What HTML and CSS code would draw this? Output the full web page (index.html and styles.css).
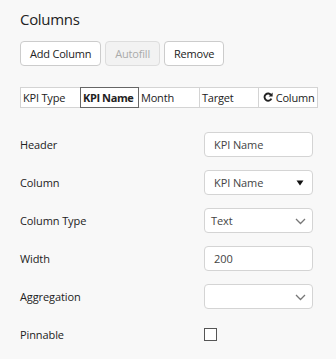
FILE: index.html
```html
<!DOCTYPE html>
<html lang="en">

<head>
  <meta charset="UTF-8">
  <title>Columns</title>
  <link rel="stylesheet" href="styles.css">
</head>

<body>

  <div class="panel">
    <h2 class="title">Columns</h2>

    <!-- Toolbar -->
    <div class="toolbar">
      <button class="btn">Add Column</button>
      <button class="btn" disabled>Autofill</button>
      <button class="btn">Remove</button>
    </div>

    <!-- Column tabs -->
    <div class="tabs">
      <div class="tab">KPI Type</div>
      <div class="tab active">KPI Name</div>
      <div class="tab">Month</div>
      <div class="tab">Target</div>
      <div class="tab">
        <svg class="refresh" width="10" height="10" viewBox="0 0 10 10">
          <path d="M8.2 3.2A3.6 3.6 0 1 0 8.4 6.6" fill="none" stroke="#222" stroke-width="1.9" />
          <path d="M9.6 0.6V4.6H5.6Z" fill="#222" />
        </svg>
        Column
      </div>
    </div>

    <!-- Column settings -->
    <div class="form">
      <label class="label">Header</label>
      <div class="field">
        <div class="input">KPI Name</div>
      </div>

      <label class="label">Column</label>
      <div class="field">
        <div class="input select">
          KPI Name
          <svg class="caret" width="8" height="6" viewBox="0 0 8 6">
            <path d="M0.5 0.5H7.5L4 5.5Z" fill="#111" />
          </svg>
        </div>
      </div>

      <label class="label">Column Type</label>
      <div class="field">
        <div class="input native">
          Text
          <svg class="chevron" width="11" height="7" viewBox="0 0 11 7">
            <path d="M1 1L5.5 5.5L10 1" fill="none" stroke="#777" stroke-width="1.3" />
          </svg>
        </div>
      </div>

      <label class="label">Width</label>
      <div class="field">
        <div class="input">200</div>
      </div>

      <label class="label">Aggregation</label>
      <div class="field">
        <div class="input native">
          <svg class="chevron" width="11" height="7" viewBox="0 0 11 7">
            <path d="M1 1L5.5 5.5L10 1" fill="none" stroke="#777" stroke-width="1.3" />
          </svg>
        </div>
      </div>

      <label class="label">Pinnable</label>
      <div class="field">
        <span class="checkbox"></span>
      </div>
    </div>
  </div>

</body>

</html>
```

FILE: styles.css
```css
body {
  font-family: 'Open Sans', 'Noto Sans', sans-serif;
  background-color: #f8f8f8;
  color: #222;
  margin: 0;
  padding: 0;
}

.panel {
  padding: 8px 20px 0 20px;
}

.title {
  font-size: 15px;
  letter-spacing: -0.3px;
  font-weight: 400;
  margin: 0;
  line-height: 22px;
  color: #222;
}

/* Toolbar */
.toolbar {
  display: flex;
  gap: 4px;
  margin-top: 11px;
}

.btn {
  font-family: inherit;
  font-size: 11px;
  letter-spacing: -0.2px;
  color: #222;
  background-color: #fff;
  border: 1px solid #ccc;
  border-radius: 4px;
  height: 25px;
  padding: 0 9px;
}

.btn:disabled {
  background-color: #f2f2f2;
  border-color: #ddd;
  color: #aaa;
}

/* Tabs */
.tabs {
  display: grid;
  grid-template-columns: 61px 58px 61px 59px 59px;
  margin-top: 21px;
  width: 298px;
}

.tab {
  height: 21px;
  line-height: 19px;
  box-sizing: border-box;
  border: 1px solid #d4d4d4;
  background-color: #fff;
  font-size: 11px;
  letter-spacing: -0.2px;
  padding-left: 2px;
  margin-left: -1px;
  white-space: nowrap;
  overflow: hidden;
}

.tab:first-child {
  margin-left: 0;
}

.tab.active {
  border-color: #666;
  font-weight: 700;
  letter-spacing: -0.4px;
  position: relative;
}

.refresh {
  margin-left: 2px;
}

/* Form */
.form {
  display: grid;
  grid-template-columns: 184px 109px;
  row-gap: 13px;
  margin-top: 24px;
  align-items: center;
}

.label {
  font-size: 11px;
  letter-spacing: -0.1px;
  color: #222;
}

.field {
  height: 25px;
  display: flex;
  align-items: center;
}

.input {
  position: relative;
  box-sizing: border-box;
  width: 109px;
  height: 25px;
  line-height: 23px;
  border: 1px solid #d4d4d4;
  border-radius: 4px;
  background-color: #fff;
  padding-left: 9px;
  font-size: 11px;
  letter-spacing: -0.1px;
  color: #444;
}

.input.native {
  padding-left: 6px;
}

.caret {
  position: absolute;
  right: 8px;
  top: 9px;
}

.chevron {
  position: absolute;
  right: 6px;
  top: 9px;
}

.checkbox {
  display: block;
  width: 13px;
  height: 13px;
  box-sizing: border-box;
  border: 1px solid #555;
  background-color: #fff;
}
```
